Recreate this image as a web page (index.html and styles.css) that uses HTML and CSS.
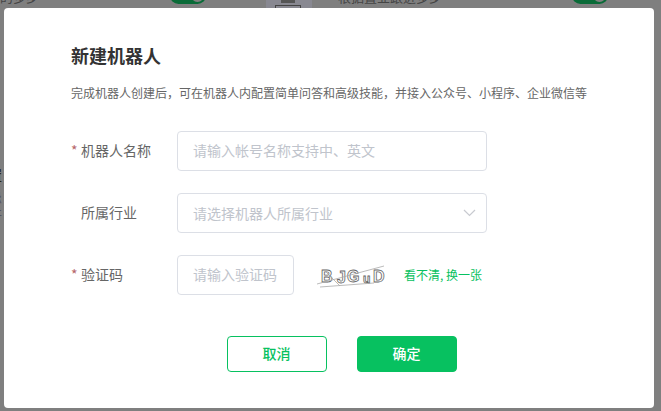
FILE: index.html
```html
<!DOCTYPE html>
<html lang="zh-CN">
<head>
    <meta charset="UTF-8">
    <meta name="viewport" content="width=device-width, initial-scale=1.0">
    <title>新建机器人</title>
    <link rel="stylesheet" href="styles.css">
</head>
<body>
    <!-- page behind the mask -->
    <div class="behind">
        <span class="toggle toggle-a"></span>
        <span class="toggle toggle-b"></span>
        <span class="behind-panel"><span class="behind-box"></span><span class="behind-mark"></span></span>
        <span class="behind-text text-a">的多步</span>
        <span class="behind-text text-b">根据置业跟进多步</span>
        <span class="behind-side side-a">置</span>
        <span class="behind-side side-b">忌</span>
        <span class="behind-side side-c">开</span>
    </div>

    <div class="dialog">
        <h1 class="title">新建机器人</h1>
        <p class="desc">完成机器人创建后，可在机器人内配置简单问答和高级技能，并接入公众号、小程序、企业微信等</p>

        <div class="row">
            <label class="label"><span class="star">*</span>机器人名称</label>
            <div class="input input-wide">请输入帐号名称支持中、英文</div>
        </div>
        <div class="row">
            <label class="label"><span class="star"></span>所属行业</label>
            <div class="input input-wide select">
                请选择机器人所属行业
                <svg class="arrow" width="13" height="8" viewBox="0 0 13 8">
                    <path d="M1 1l5.500 5.500 5.500-5.500" fill="none" stroke="#c8cad0" stroke-width="1.200"/>
                </svg>
            </div>
        </div>
        <div class="row">
            <label class="label"><span class="star">*</span>验证码</label>
            <div class="input input-code">请输入验证码</div>
            <svg class="captcha" width="72" height="26" viewBox="0 0 72 26">
                <g fill="#fff" stroke="#666" stroke-width="0.800" font-family="Liberation Sans, sans-serif" font-size="16" font-weight="bold">
                    <text x="5" y="19">B</text>
                    <text x="21" y="20">J</text>
                    <text x="31" y="19">G</text>
                    <text x="47" y="20" font-size="12">u</text>
                    <text x="57" y="19">D</text>
                </g>
                <path d="M1 21L68 3M4 24L58 20M10 9L24 23" fill="none" stroke="#aaa" stroke-width="0.800"/>
            </svg>
            <a class="refresh">看不清, 换一张</a>
        </div>

        <div class="actions">
            <button class="btn btn-cancel">取消</button>
            <button class="btn btn-ok">确定</button>
        </div>
    </div>
</body>
</html>
```

FILE: styles.css
```css
html, body {
    margin: 0;
    height: 100%;
}
body {
    width: 661px;
    height: 411px;
    overflow: hidden;
    position: relative;
    background-color: #7f7f7f;
    font-family: "Noto Sans CJK SC", "Liberation Sans", sans-serif;
    padding: 8px 0 0 4px;
    box-sizing: border-box;
}
.behind span {
    position: absolute;
}
.toggle {
    top: -13px;
    width: 36px;
    height: 17px;
    border-radius: 9px;
    background-color: #0a6b38;
}
.toggle::after {
    content: "";
    position: absolute;
    right: 2px;
    top: 2px;
    width: 13px;
    height: 13px;
    border-radius: 50%;
    background-color: #808080;
}
.toggle-a { left: 170px; }
.toggle-b { left: 572px; }
.behind-panel {
    left: 266px;
    top: 0;
    width: 46px;
    height: 8px;
    background-color: #888891;
}
.behind-box {
    left: 9px;
    top: 5px;
    width: 24px;
    height: 6px;
    border: 1px solid #444;
}
.behind-mark {
    left: 15px;
    top: 0;
    width: 14px;
    height: 3px;
    background-color: #555;
}
.behind-text {
    top: -12px;
    font-size: 13px;
    line-height: 18px;
    color: #444;
}
.text-a { left: 0; }
.text-b { left: 338px; }
.behind-side {
    left: -11px;
    font-size: 13px;
    line-height: 14px;
    color: #55555f;
}
.side-a { top: 168px; color: #2a2410; font-weight: bold; }
.side-b { top: 190px; }
.side-c { top: 208px; }

.dialog {
    position: relative;
    width: 650px;
    height: 400px;
    box-sizing: border-box;
    padding: 35px 67px 0;
    background-color: #fff;
    border-radius: 4px;
}
.title {
    margin: 0;
    font-size: 18px;
    line-height: 24px;
    font-weight: 700;
    color: #333;
}
.desc {
    margin: 17px 0 29px;
    font-size: 12px;
    line-height: 18px;
    color: #666;
    white-space: nowrap;
}
.row {
    display: flex;
    align-items: center;
    height: 40px;
    margin-bottom: 22px;
}
.label {
    width: 106px;
    margin-top: -2px;
    font-size: 14px;
    color: #666;
}
.star {
    display: inline-block;
    width: 10px;
    color: #b5656a;
}
.input {
    box-sizing: border-box;
    height: 40px;
    padding: 0 15px;
    border: 1px solid #dcdfe6;
    border-radius: 4px;
    font-size: 14px;
    line-height: 36px;
    color: #c0c4cc;
    white-space: nowrap;
}
.input-wide { width: 310px; }
.input-code { width: 117px; }
.select {
    display: flex;
    justify-content: space-between;
    align-items: center;
}
.arrow { margin-right: -5px; }
.captcha { margin: 2px 0 0 22px; }
.refresh {
    margin-left: 16px;
    margin-top: -2px;
    font-size: 12px;
    color: #07c160;
}
.actions {
    display: flex;
    justify-content: center;
    gap: 30px;
    margin-top: 41px;
    margin-left: 25px;
}
.btn {
    box-sizing: border-box;
    width: 100px;
    height: 36px;
    padding: 0 0 2px;
    border: 1px solid #07c160;
    border-radius: 4px;
    font-family: inherit;
    font-size: 14px;
    font-weight: 500;
}
.btn-cancel {
    background-color: #fff;
    color: #07c160;
}
.btn-ok {
    background-color: #07c160;
    color: #fff;
}
```
